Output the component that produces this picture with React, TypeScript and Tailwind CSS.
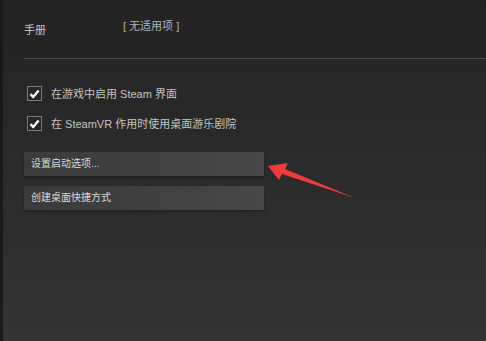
import React from "react";

const font = { fontFamily: '"Liberation Sans", "Noto Sans CJK SC", sans-serif' };

function Check({ label }: { label: string }) {
  return (
    <div className="flex items-center h-[15px]">
      <div className="w-[15px] h-[15px] border border-[#7c7c7c] bg-[#262626] flex items-center justify-center">
        <svg width="11" height="10" viewBox="0 0 11 10">
          <path d="M1.5 5.2 L4.2 8 L9.6 1.6" fill="none" stroke="#ffffff" strokeWidth="2.4" />
        </svg>
      </div>
      <span className="ml-[9px] text-[11px] leading-[16px] text-[#c4c4c4]">{label}</span>
    </div>
  );
}

function Btn({ label }: { label: string }) {
  return (
    <button className="w-[240px] h-[24px] bg-gradient-to-r from-[#3a3a3a] to-[#474747] text-left pl-[7px] text-[10px] leading-[24px] text-[#d8dadc] shadow-[0_2px_3px_rgba(0,0,0,0.25)]">
      {label}
    </button>
  );
}

export default function App() {
  return (
    <div
      className="w-[486px] h-[341px] relative flex bg-gradient-to-b from-[#232323] to-[#333333] overflow-hidden"
      style={font}
    >
      <div className="w-[3px] bg-[#1a1a1a]" />
      <div className="flex-1 flex flex-col pl-[21px]">
        {/* header */}
        <div className="flex items-start pt-[18px]">
          <span className="w-[99px] mt-[4px] text-[11px] leading-[16px] text-[#c8c8c8]">手册</span>
          <span className="text-[11px] leading-[16px] text-[#b4b4b4]">[ 无适用项 ]</span>
        </div>
        <div className="mt-[20px] h-px bg-[#484848]" />

        {/* checkboxes */}
        <div className="mt-[27px] ml-[3px] flex flex-col gap-[15px]">
          <Check label="在游戏中启用 Steam 界面" />
          <Check label="在 SteamVR 作用时使用桌面游乐剧院" />
        </div>

        {/* buttons */}
        <div className="mt-[21px] flex flex-col gap-[10px]">
          <Btn label="设置启动选项..." />
          <Btn label="创建桌面快捷方式" />
        </div>
      </div>

      {/* annotation arrow */}
      <svg className="absolute left-0 top-0 pointer-events-none" width="486" height="341">
        <polygon points="268,166 288,163 285,169 355,198 282,174 279,180" fill="#ef3b3b" />
      </svg>
    </div>
  );
}
